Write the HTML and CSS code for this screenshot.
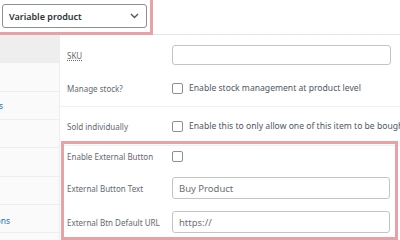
FILE: index.html
```html
<!DOCTYPE html>
<html lang="en">
<head>
    <meta charset="UTF-8">
    <title>Product data</title>
    <link rel="stylesheet" href="styles.css">
</head>
<body>
    <div class="page">
        <div class="product-type">
            <div class="select">
                <span>Variable product</span>
                <svg class="chevron" width="9" height="6" viewBox="0 0 9 6">
                    <path d="M1 1l3.5 3.5L8 1" fill="none" stroke="#50575e" stroke-width="1.4"/>
                </svg>
            </div>
        </div>

        <div class="panel">
            <ul class="tabs">
                <li class="active"></li>
                <li class="tall"></li>
                <li><span>Linked Products</span></li>
                <li></li>
                <li class="tall"></li>
                <li></li>
                <li class="wide"><span>Variations</span></li>
                <li></li>
            </ul>

            <div class="fields">
                <div class="group">
                    <div class="row row-sku">
                        <label class="label"><abbr>SKU</abbr></label>
                        <input class="text-input" type="text">
                        <span class="help-tip"></span>
                    </div>
                    <div class="row row-stock">
                        <label class="label">Manage stock?</label>
                        <span class="checkbox"></span>
                        <span class="desc">Enable stock management at product level</span>
                    </div>
                </div>

                <div class="group">
                    <div class="row row-sold">
                        <label class="label">Sold individually</label>
                        <span class="checkbox"></span>
                        <span class="desc">Enable this to only allow one of this item to be bought in a single order</span>
                    </div>
                </div>

                <div class="group external">
                    <div class="row row-ext">
                        <label class="label">Enable External Button</label>
                        <span class="checkbox"></span>
                    </div>
                    <div class="row row-text">
                        <label class="label">External Button Text</label>
                        <input class="text-input short" type="text" value="Buy Product">
                    </div>
                    <div class="row row-url">
                        <label class="label">External Btn Default URL</label>
                        <input class="text-input short" type="text" value="https://">
                    </div>
                </div>
            </div>
        </div>

        <!-- annotation frames drawn over the screenshot -->
        <div class="mark mark-type"></div>
        <div class="mark mark-external"></div>
    </div>
</body>
</html>
```

FILE: styles.css
```css
* {
    margin: 0;
    padding: 0;
    box-sizing: border-box;
}

body {
    font-family: "Noto Sans", "Open Sans", sans-serif;
    background: #fff;
    color: #50575e;
}

.page {
    position: relative;
    width: 400px;
    height: 240px;
    overflow: hidden;
}

.product-type {
    height: 35px;
    padding: 4px 0 0 2px;
    border-bottom: 1px solid #e6e6e6;
}

.select {
    width: 145px;
    height: 24px;
    border: 1px solid #8c8f94;
    border-radius: 3px;
    padding: 0 6px;
    display: flex;
    align-items: center;
    justify-content: space-between;
    font-size: 9px;
    font-weight: 600;
    color: #2c3338;
}

.chevron {
    margin-right: 1px;
}

.panel {
    display: flex;
    height: 205px;
}

.tabs {
    list-style: none;
    width: 60px;
    flex-shrink: 0;
    background: #fafafa;
    border-right: 1px solid #eee;
}

.tabs li {
    height: 28px;
    border-bottom: 1px solid #eee;
    display: flex;
    align-items: center;
    justify-content: flex-end;
    padding-right: 56px;
    overflow: hidden;
    white-space: nowrap;
    font-size: 8.5px;
    color: #2271b1;
}

.tabs li.tall {
    height: 29px;
}

.tabs li.wide {
    padding-right: 49px;
    padding-top: 4px;
}

.tabs li.active {
    background: #eee;
}

.fields {
    flex: 1;
}

.group {
    border-bottom: 1px solid #f0f0f0;
}

.group.external {
    border-bottom: none;
}

.row {
    display: flex;
    align-items: center;
    padding-left: 7px;
    white-space: nowrap;
}

.label {
    width: 105px;
    flex-shrink: 0;
    font-size: 8px;
    color: #646970;
}

.label abbr {
    text-decoration: underline dotted;
}

.text-input {
    width: 219px;
    height: 20px;
    border: 1px solid #c3c4c7;
    border-radius: 3px;
    padding: 0 6px;
    font-family: inherit;
    font-size: 9.5px;
    color: #6b7075;
    background: #fff;
    outline: none;
    flex-shrink: 0;
}

.text-input.short {
    width: 218px;
    height: 22px;
}

.help-tip {
    width: 9px;
    height: 9px;
    border-radius: 50%;
    background: #777;
    margin-left: 9px;
    flex-shrink: 0;
}

.checkbox {
    width: 11px;
    height: 11px;
    border: 1px solid #8c8f94;
    border-radius: 2px;
    flex-shrink: 0;
    background: #fff;
}

.desc {
    font-size: 8.6px;
    margin-left: 6px;
    color: #50575e;
}

.row-sku { height: 40px; }
.row-stock { height: 26px; margin-bottom: 5px; }
.row-sold { height: 38px; }
.row-ext { height: 21px; }
.row-text { height: 42px; }
.row-url { height: 26px; }

.mark {
    position: absolute;
    border: 3px solid #e8a1a4;
}

.mark-type {
    left: -3px;
    top: -3px;
    width: 156px;
    height: 38px;
}

.mark-external {
    left: 61px;
    top: 141px;
    width: 337px;
    height: 99px;
}
```
